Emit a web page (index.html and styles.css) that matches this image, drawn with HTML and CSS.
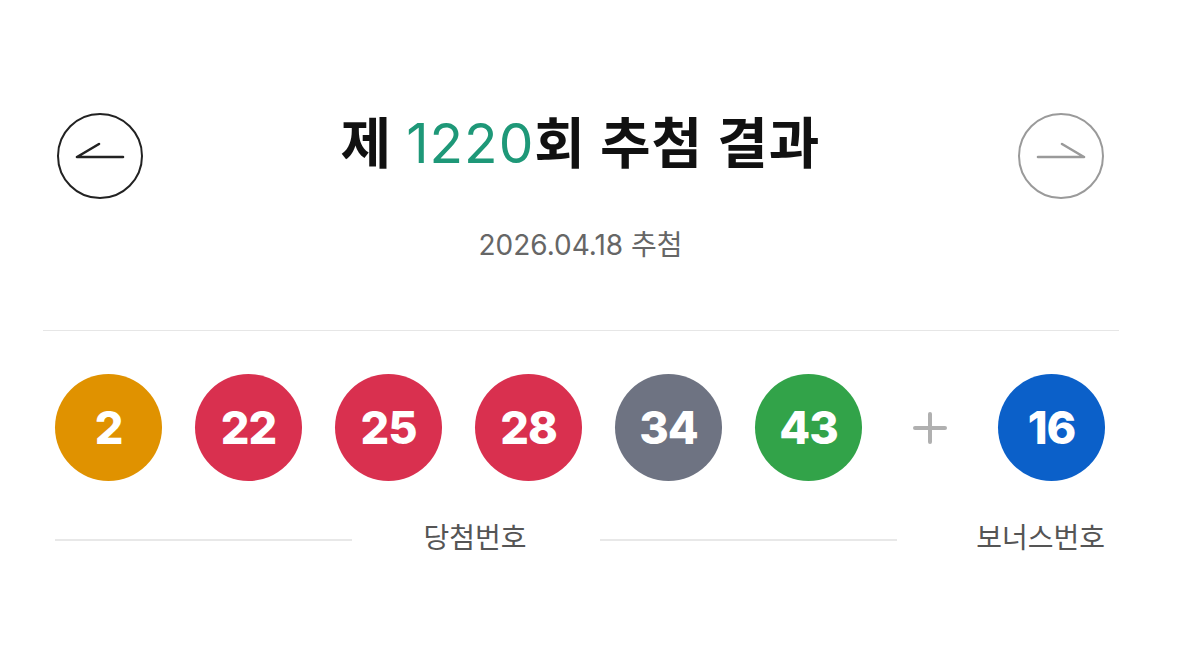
FILE: index.html
```html
<!DOCTYPE html>
<html lang="ko">

<head>
    <meta charset="UTF-8">
    <meta name="viewport" content="width=device-width, initial-scale=1.0">
    <title>당첨결과</title>
    <link rel="stylesheet" href="styles.css">
</head>

<body>
    <div class="wrap">
        <div class="head">
            <button class="nav prev" type="button">
                <svg width="86" height="86" viewBox="0 0 86 86">
                    <path d="M20 44 H66 M20 44 L42 31" />
                </svg>
            </button>
            <div class="title-box">
                <h1 class="title">제 <span class="round">1220</span>회 추첨 결과</h1>
                <p class="date">2026.04.18 추첨</p>
            </div>
            <button class="nav next" type="button">
                <svg width="86" height="86" viewBox="0 0 86 86">
                    <path d="M20 44 H66 M66 44 L44 31" />
                </svg>
            </button>
        </div>

        <div class="divider"></div>

        <div class="balls">
            <div class="win">
                <span class="ball yellow">2</span>
                <span class="ball red">22</span>
                <span class="ball red">25</span>
                <span class="ball red">28</span>
                <span class="ball gray">34</span>
                <span class="ball green">43</span>
            </div>
            <div class="plus"></div>
            <span class="ball blue">16</span>
        </div>

        <div class="labels">
            <div class="win-label">
                <span class="line"></span>
                <span class="label-text">당첨번호</span>
                <span class="line"></span>
            </div>
            <span class="bonus-label">보너스번호</span>
        </div>
    </div>
</body>

</html>
```

FILE: styles.css
```css
body {
    margin: 0;
    background-color: #ffffff;
    font-family: "Inter", "Noto Sans CJK KR", sans-serif;
}

.wrap {
    width: 1076px;
    margin-left: 43px;
}

.head {
    display: flex;
    align-items: flex-start;
    padding: 113px 15px 0 14px;
}

.nav {
    width: 86px;
    height: 86px;
    padding: 0;
    border-radius: 50%;
    background: none;
    box-sizing: border-box;
    flex-shrink: 0;
    position: relative;
}

.nav svg {
    position: absolute;
    left: -2px;
    top: -2px;
    fill: none;
    stroke-width: 2.6;
    stroke-linecap: round;
}

.prev {
    border: 2px solid #222222;
}

.prev svg {
    stroke: #222222;
}

.next {
    border: 2px solid #9a9a9a;
}

.next svg {
    stroke: #9a9a9a;
}

.title-box {
    flex: 1;
    text-align: center;
}

.title {
    margin: -2px 0 0 0;
    font-size: 55px;
    line-height: 64px;
    font-weight: 700;
    letter-spacing: 1px;
    color: #111111;
}

.title .round {
    font-weight: 400;
    color: #1e9878;
}

.date {
    margin: 52px 0 0 0;
    font-size: 28px;
    line-height: 36px;
    color: #666666;
}

.divider {
    height: 1px;
    background-color: #e6e6e6;
    margin-top: 67px;
}

.balls {
    display: flex;
    align-items: center;
    padding: 43px 14px 0 12px;
}

.win {
    display: flex;
    gap: 33px;
}

.ball {
    width: 107px;
    height: 107px;
    border-radius: 50%;
    display: flex;
    align-items: center;
    justify-content: center;
    color: #ffffff;
    font-size: 45px;
    font-weight: 800;
    letter-spacing: -1px;
}

.yellow { background-color: #e09200; }
.red { background-color: #d9304f; }
.gray { background-color: #6e7382; }
.green { background-color: #32a349; }
.blue { background-color: #0b60c9; }

.plus {
    width: 136px;
    height: 34px;
    position: relative;
}

.plus::before,
.plus::after {
    content: "";
    position: absolute;
    background-color: #b0b0b0;
    border-radius: 2px;
}

.plus::before {
    width: 34px;
    height: 4px;
    left: 51px;
    top: 15px;
}

.plus::after {
    width: 4px;
    height: 32px;
    left: 66px;
    top: 1px;
}

.labels {
    display: flex;
    align-items: center;
    padding: 39px 14px 0 12px;
}

.win-label {
    width: 842px;
    display: flex;
    align-items: center;
}

.line {
    width: 297px;
    height: 2px;
    background-color: #e8e8e8;
    margin-top: 4px;
}

.label-text {
    flex: 1;
    text-align: center;
    font-size: 28px;
    line-height: 36px;
    color: #555555;
    padding-right: 2px;
}

.bonus-label {
    margin-left: auto;
    font-size: 28px;
    line-height: 36px;
    color: #555555;
}
```
